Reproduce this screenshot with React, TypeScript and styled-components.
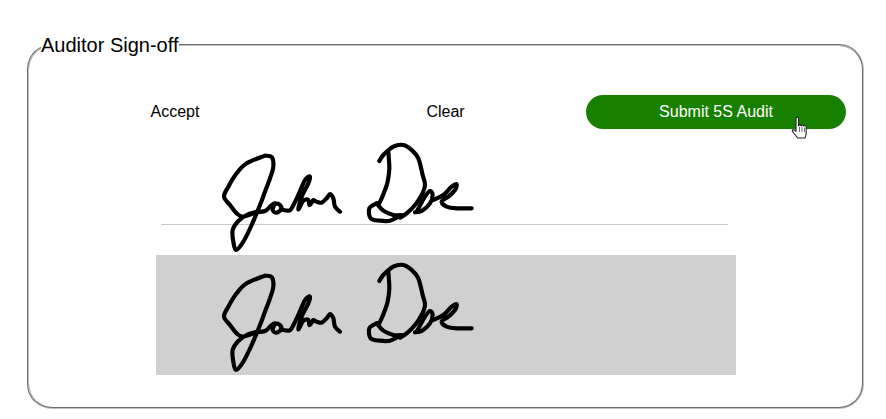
import React from "react";
import styled, { createGlobalStyle } from "styled-components";

const Global = createGlobalStyle`
  html, body { margin: 0; padding: 0; background: #fff; }
  body { font-family: "Liberation Sans", Arial, sans-serif; color: #000; }
`;

const Page = styled.main`
  width: 886px;
  height: 419px;
  padding: 34px 22px 0 27px;
  box-sizing: border-box;
  overflow: hidden;
`;

const Panel = styled.fieldset`
  margin: 0;
  padding: 39px 16px 32px 16px;
  min-width: 0;
  height: 375px;
  box-sizing: border-box;
  border: 2px groove #c0c0c0;
  border-radius: 25px;
`;

const Title = styled.legend`
  padding: 0;
  margin-left: -4px;
  font-size: 20px;
  line-height: 22px;
`;

const Actions = styled.div`
  display: flex;
  justify-content: space-between;
  height: 34px;
`;

const Action = styled.button<{ $primary?: boolean }>`
  position: relative;
  flex: 0 0 260px;
  height: 34px;
  margin: 0;
  padding: 0;
  border: 0;
  border-radius: 17px;
  font: 16px "Liberation Sans", Arial, sans-serif;
  color: ${(p) => (p.$primary ? "#fff" : "#000")};
  background: ${(p) => (p.$primary ? "#178000" : "transparent")};
`;

const Pointer = styled.svg`
  position: absolute;
  left: 205px;
  top: 21px;
  width: 22px;
  height: 26px;
  pointer-events: none;
`;

const Pad = styled.div`
  position: relative;
  width: 580px;
  height: 120px;
  margin: 6px auto 0;
`;

const Guide = styled.div`
  position: absolute;
  left: 5px;
  width: 567px;
  top: 89px;
  height: 1px;
  background: #c8c8c8;
`;

const Preview = styled.div`
  width: 580px;
  height: 120px;
  margin: 0 auto;
  background: #d0d0d0;
`;

const Ink = styled.svg`
  position: relative;
  display: block;
  width: 580px;
  height: 120px;
`;

type P = [number, number];

const smooth = (pts: P[]) => {
  let d = `M${pts[0][0]} ${pts[0][1]}`;
  for (let i = 0; i < pts.length - 1; i++) {
    const a = pts[Math.max(i - 1, 0)];
    const b = pts[i];
    const c = pts[i + 1];
    const e = pts[Math.min(i + 2, pts.length - 1)];
    const c1x = b[0] + (c[0] - a[0]) / 6;
    const c1y = b[1] + (c[1] - a[1]) / 6;
    const c2x = c[0] - (e[0] - b[0]) / 6;
    const c2y = c[1] - (e[1] - b[1]) / 6;
    d += ` C${c1x.toFixed(1)} ${c1y.toFixed(1)} ${c2x.toFixed(1)} ${c2y.toFixed(1)} ${c[0]} ${c[1]}`;
  }
  return d;
};

const john: P[][] = [
  [[165,62],[185,66],[190,95],[180,130],[165,170],[150,210],[125,270],[100,320],[78,345],[70,320],[68,285],[85,258],[110,240],[135,232],[100,245],[80,235],[60,210],[42,185],[55,155],[80,115],[110,85],[165,62]],
  [[135,232],[165,228],[183,212],[195,205],[210,210],[213,223],[200,233],[188,225],[195,205]],
  [[213,223],[235,227],[245,220],[265,180],[285,135],[300,125],[295,145],[275,185],[265,223],[280,197],[295,195],[298,210],[305,203],[310,195],[320,200],[335,203],[350,190],[360,177],[370,190],[375,215],[390,230]],
];

const doe: P[][] = [
  [[88,78],[100,60],[130,35],[160,30],[185,45],[205,70],[218,120],[225,150],[215,180],[195,210],[170,235],[150,248]],
  [[115,50],[118,100],[113,140],[105,165],[95,190],[85,210]],
  [[80,205],[58,220],[62,250],[90,257],[120,257],[150,243]],
  [[80,205],[100,227],[130,240],[155,240]],
  [[200,230],[225,185],[240,168],[248,180],[240,205],[215,228],[195,232]],
  [[250,195],[280,180],[305,155],[320,148],[315,165],[295,185],[275,200],[290,215],[320,220],[365,220]],
];

const Signature = () => (
  <Ink viewBox="0 0 580 120" fill="none" stroke="#000" strokeLinecap="round" strokeLinejoin="round">
    <g transform="translate(54 0) scale(0.3333)" strokeWidth={12.5}>
      {john.map((s, i) => <path key={i} d={smooth(s)} />)}
    </g>
    <g transform="translate(194 0) scale(0.3333)" strokeWidth={12.5}>
      {doe.map((s, i) => <path key={i} d={smooth(s)} />)}
    </g>
  </Ink>
);

export default function App() {
  return (
    <Page>
      <Global />
      <Panel>
        <Title>Auditor Sign-off</Title>
        <Actions>
          <Action>Accept</Action>
          <Action>Clear</Action>
          <Action $primary>
            Submit 5S Audit
            <Pointer viewBox="0 0 22 26">
              <path
                d="M5 2.2c0-1.5 2.6-1.5 2.6 0V10c.2-1.500 2.400-1.500 2.600 0 .2-1.200 2.400-1.200 2.600.2.200-1 2.400-1 2.400.4v6.400c0 2.200-.6 3.400-1.200 5H6.600C5.600 20.200 3.800 18.200 1.600 15.600c-1-1.200.6-2.600 1.800-1.600L5 15.400z"
                fill="#fff"
                stroke="#222"
                strokeWidth="1.100"
                strokeLinejoin="round"
              />
              <path d="M8.500 11v5M11 11v5M13.500 11.500V16" stroke="#444" strokeWidth=".8" fill="none" />
            </Pointer>
          </Action>
        </Actions>
        <Pad>
          <Guide />
          <Signature />
        </Pad>
        <Preview>
          <Signature />
        </Preview>
      </Panel>
    </Page>
  );
}
